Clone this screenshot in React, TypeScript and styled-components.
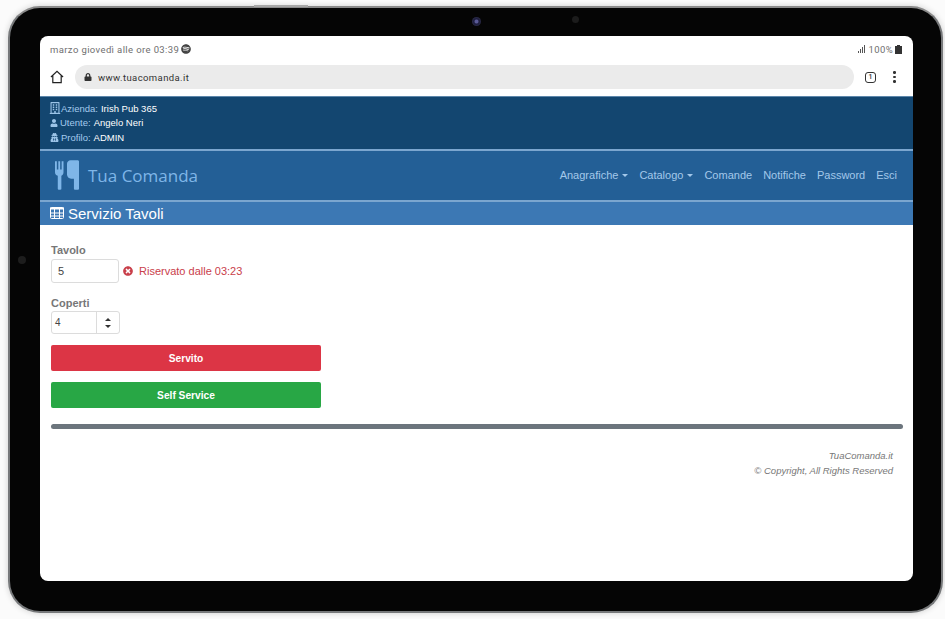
import React from 'react';
import styled, { createGlobalStyle } from 'styled-components';
import { FaUser, FaUserSecret, FaRegBuilding, FaTimesCircle, FaLock, FaSpotify } from 'react-icons/fa';

const GlobalStyle = createGlobalStyle`
  html, body {
    margin: 0;
    padding: 0;
    background: #fbfbfb;
    font-family: "Liberation Sans", Arial, sans-serif;
  }
`;

const Page = styled.div`
  width: 945px;
  height: 619px;
  box-sizing: border-box;
  padding: 6px 2px 6px 8px;
  overflow: hidden;
`;

const Device = styled.div`
  position: relative;
  height: 100%;
  box-sizing: border-box;
  padding: 28px 28px 30px 30px;
  background: #050505;
  border: 2px solid #77797b;
  border-top-color: #8a8a8a;
  border-radius: 32px;
  box-shadow: 0 0 6px rgba(0, 0, 0, 0.18);
`;

const Camera = styled.span`
  position: absolute;
  top: 9px;
  left: 462px;
  width: 9px;
  height: 9px;
  border-radius: 50%;
  background: radial-gradient(circle, #5a5a96 0 22%, #1a1a3a 40%, #2a2a48 70%, #0a0a0a 100%);
`;

const Sensor = styled.span`
  position: absolute;
  top: 8px;
  left: 562px;
  width: 7px;
  height: 7px;
  border-radius: 50%;
  background: #1c1c1c;
`;

const SideDot = styled.span`
  position: absolute;
  top: 248px;
  left: 8px;
  width: 8px;
  height: 8px;
  border-radius: 50%;
  background: #1d1d1d;
`;

const TopButton = styled.span`
  position: absolute;
  top: -3px;
  left: 244px;
  width: 54px;
  height: 2px;
  background: #a8a8a8;
`;

const Screen = styled.div`
  height: 100%;
  background: #fff;
  border-radius: 8px;
  overflow: hidden;
  display: flex;
  flex-direction: column;
`;

const StatusBar = styled.div`
  height: 28px;
  box-sizing: border-box;
  padding: 0 11px 2px 10px;
  display: flex;
  align-items: center;
  justify-content: space-between;
  font-family: Roboto, "Noto Sans", sans-serif;
  font-size: 9.5px;
  letter-spacing: 0.38px;
  color: #6f6f6f;
`;

const StatusGroup = styled.div`
  display: flex;
  align-items: center;
  gap: 2px;

  svg {
    color: #444;
  }
`;

const ChromeBar = styled.div`
  height: 32px;
  box-sizing: border-box;
  padding: 1px 12px 7px 10px;
  display: flex;
  align-items: center;
  gap: 11px;
  color: #222;
`;

const UrlPill = styled.div`
  flex: 1;
  height: 24px;
  box-sizing: border-box;
  padding-left: 9px;
  border-radius: 12px;
  background: #ebebeb;
  display: flex;
  align-items: center;
  gap: 6px;
  font-family: Roboto, "Noto Sans", sans-serif;
  font-size: 9.5px;
  letter-spacing: 0.4px;
  color: #333;
`;

const TabCount = styled.span`
  width: 9px;
  height: 9px;
  border: 1.5px solid #333;
  border-radius: 3px;
  font-family: Roboto, sans-serif;
  font-size: 7px;
  font-weight: 500;
  line-height: 9px;
  text-align: center;
  color: #333;
`;

const MenuDots = styled.span`
  display: flex;
  flex-direction: column;
  gap: 2px;
  margin-left: 6px;
  margin-right: 5.5px;

  i {
    width: 2.5px;
    height: 2.5px;
    border-radius: 50%;
    background: #333;
  }
`;

const InfoBar = styled.div`
  height: 53px;
  box-sizing: border-box;
  padding: 4px 10px 0;
  background: #134670;
  border-top: 1px solid #5d87ab;
  display: flex;
  flex-direction: column;
`;

const InfoRow = styled.div`
  height: 14.5px;
  display: flex;
  align-items: center;
  gap: 2px;
  font-size: 9.5px;
  color: #fff;
  white-space: nowrap;

  svg {
    color: #9cc4e8;
    flex: none;
  }

  span {
    color: #a3cbee;
    margin-right: 1px;
  }
`;

const BuildingIcon = styled(FaRegBuilding)`
  margin: 0 -2px 0 -1px;
`;

const NavBar = styled.div`
  height: 53px;
  box-sizing: border-box;
  padding: 0 16px 0 15px;
  background: #235f96;
  border-top: 2px solid #7ba6cf;
  border-bottom: 2px solid #7ba6cf;
  display: flex;
  align-items: center;
  justify-content: space-between;
`;

const Brand = styled.div`
  display: flex;
  align-items: center;
  gap: 9px;
  font-family: "Open Sans", "Noto Sans", sans-serif;
  font-size: 17px;
  color: #7fb6e8;
  padding-bottom: 1px;
`;

const NavLinks = styled.div`
  display: flex;
  align-items: center;
  gap: 11px;
  padding-bottom: 2px;
`;

const NavLink = styled.span`
  display: flex;
  align-items: center;
  gap: 4px;
  font-size: 11px;
  color: #a3c8ea;
`;

const Caret = styled.i`
  width: 0;
  height: 0;
  border-left: 3.5px solid transparent;
  border-right: 3.5px solid transparent;
  border-top: 3px solid #a3c8ea;
  margin-top: 1px;
`;

const TitleBar = styled.div`
  height: 23px;
  box-sizing: border-box;
  padding: 0 10px 1px;
  background: #3c78b4;
  display: flex;
  align-items: center;
  gap: 4px;
  font-size: 15px;
  color: #fff;
`;

const Content = styled.div`
  flex: 1;
  padding: 18px 10px 0 11px;
  display: flex;
  flex-direction: column;
`;

const FieldLabel = styled.label`
  display: block;
  height: 16px;
  line-height: 15px;
  font-size: 11px;
  font-weight: 700;
  color: #777;
`;

const FieldRow = styled.div`
  display: flex;
  align-items: center;
  gap: 4px;
  margin-bottom: 13px;
`;

const TextBox = styled.div`
  width: 68px;
  height: 24px;
  box-sizing: border-box;
  padding-left: 6px;
  border: 1px solid #dcdcdc;
  border-radius: 3px;
  display: flex;
  align-items: center;
  font-size: 11px;
  color: #444;
`;

const ErrorText = styled.div`
  display: flex;
  align-items: center;
  gap: 6px;
  font-size: 11px;
  color: #c9404b;

  svg {
    color: #c9404b;
  }
`;

const SpinBox = styled.div`
  width: 69px;
  height: 23px;
  box-sizing: border-box;
  margin: -1px 0 11px;
  border: 1px solid #dcdcdc;
  border-radius: 3px;
  display: flex;
  font-size: 10px;
  color: #444;
`;

const SpinValue = styled.div`
  flex: 1;
  padding-left: 3px;
  display: flex;
  align-items: center;
`;

const SpinArrows = styled.div`
  width: 22px;
  border-left: 1px solid #dcdcdc;
  display: flex;
  flex-direction: column;
  align-items: center;
  justify-content: center;
  gap: 4px;
`;

const Arrow = styled.i<{ $down?: boolean }>`
  width: 0;
  height: 0;
  border-left: 3px solid transparent;
  border-right: 3px solid transparent;
  border-top: ${props => (props.$down ? '3px solid #333' : '0')};
  border-bottom: ${props => (props.$down ? '0' : '3px solid #333')};
`;

const ActionButton = styled.div<{ $color: string }>`
  width: 270px;
  height: 26px;
  margin-bottom: 11px;
  border-radius: 2px;
  background: ${props => props.$color};
  display: flex;
  align-items: center;
  justify-content: center;
  font-size: 10.2px;
  font-weight: 700;
  color: #fff;
`;

const Rule = styled.div`
  height: 5px;
  margin: 5px 0 0;
  border-radius: 3px;
  background: #6c757d;
`;

const Footer = styled.div`
  margin-top: 19px;
  padding-right: 10px;
  text-align: right;
  font-size: 9.5px;
  font-style: italic;
  line-height: 15px;
  color: #777;
`;

const ForkKnife = () => (
  <svg width="24" height="30" viewBox="0 0 26 32" fill="#7fb6e8">
    <path d="M0 1h2v9h1.6V1h2v9h1.6V1h2v12c0 2-1 3.2-2.3 3.8V31c0 .6-.5 1-1 1H4c-.6 0-1-.4-1-1V16.800C1 16.200 0 15 0 13z" />
    <path d="M13 4c0-2 1.500-4 4-4h7.500c.8 0 1.500.7 1.500 1.500V31c0 .6-.5 1-1 1h-3.500c-.6 0-1-.4-1-1V20h-3c-2.500 0-4.500-2-4.500-4.500z" />
  </svg>
);

const HomeIcon = () => (
  <svg width="14" height="14" viewBox="0 0 15 15" fill="none" stroke="#222" strokeWidth="1.300">
    <path d="M1 7.500 7.500 1.500 14 7.500M3 6v7.500h9V6" />
  </svg>
);

const SignalIcon = () => (
  <svg width="9" height="8" viewBox="0 0 9 8" fill="#555">
    <rect x="0" y="6" width="1" height="2" />
    <rect x="2" y="4" width="1" height="4" />
    <rect x="4" y="2" width="1" height="6" />
    <rect x="6" y="0" width="1" height="8" />
  </svg>
);

const BatteryIcon = () => (
  <svg width="7" height="9" viewBox="0 0 7 9" fill="#333">
    <path d="M2 0h3v1h2v8H0V1h2z" />
  </svg>
);

const TableIcon = () => (
  <svg width="14" height="12" viewBox="0 0 14 12" fill="none" stroke="#fff">
    <rect x=".5" y=".5" width="13" height="11" rx="1" />
    <path d="M0 1.500h14" strokeWidth="2" />
    <path d="M0 6h14M0 9h14M4.500 2v10M9.500 2v10" />
  </svg>
);

export default function App() {
  return (
    <Page>
      <GlobalStyle />
      <Device>
        <TopButton />
        <Camera />
        <Sensor />
        <SideDot />
        <Screen>
          <StatusBar>
            <StatusGroup>
              marzo giovedì alle ore 03:39
              <FaSpotify size={10} />
            </StatusGroup>
            <StatusGroup>
              <SignalIcon />
              100%
              <BatteryIcon />
            </StatusGroup>
          </StatusBar>
          <ChromeBar>
            <HomeIcon />
            <UrlPill>
              <FaLock size={8} />
              www.tuacomanda.it
            </UrlPill>
            <TabCount>1</TabCount>
            <MenuDots>
              <i />
              <i />
              <i />
            </MenuDots>
          </ChromeBar>
          <InfoBar>
            <InfoRow>
              <BuildingIcon size={12} />
              <span>Azienda:</span> Irish Pub 365
            </InfoRow>
            <InfoRow>
              <FaUser size={8} />
              <span>Utente:</span> Angelo Neri
            </InfoRow>
            <InfoRow>
              <FaUserSecret size={9} />
              <span>Profilo:</span> ADMIN
            </InfoRow>
          </InfoBar>
          <NavBar>
            <Brand>
              <ForkKnife />
              Tua Comanda
            </Brand>
            <NavLinks>
              <NavLink>Anagrafiche <Caret /></NavLink>
              <NavLink>Catalogo <Caret /></NavLink>
              <NavLink>Comande</NavLink>
              <NavLink>Notifiche</NavLink>
              <NavLink>Password</NavLink>
              <NavLink>Esci</NavLink>
            </NavLinks>
          </NavBar>
          <TitleBar>
            <TableIcon />
            Servizio Tavoli
          </TitleBar>
          <Content>
            <FieldLabel>Tavolo</FieldLabel>
            <FieldRow>
              <TextBox>5</TextBox>
              <ErrorText>
                <FaTimesCircle size={10} />
                Riservato dalle 03:23
              </ErrorText>
            </FieldRow>
            <FieldLabel>Coperti</FieldLabel>
            <SpinBox>
              <SpinValue>4</SpinValue>
              <SpinArrows>
                <Arrow />
                <Arrow $down />
              </SpinArrows>
            </SpinBox>
            <ActionButton $color="#dc3545">Servito</ActionButton>
            <ActionButton $color="#28a745">Self Service</ActionButton>
            <Rule />
            <Footer>
              TuaComanda.it
              <br />
              © Copyright, All Rights Reserved
            </Footer>
          </Content>
        </Screen>
      </Device>
    </Page>
  );
}
